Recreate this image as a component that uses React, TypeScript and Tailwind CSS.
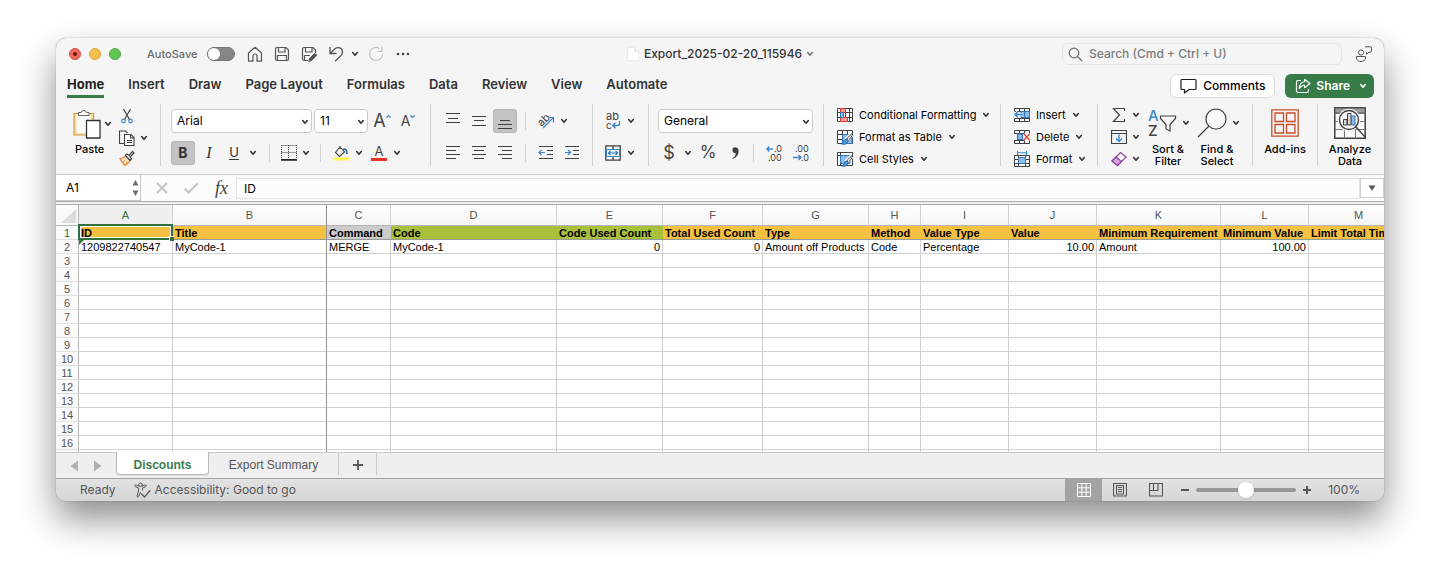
import { useState } from 'react';
import type { ReactNode } from 'react';

type Cell = { text: string; align?: 'right' };

const columns = [
  { letter: 'A', width: 'w-[94px]', title: 'ID', fill: 'bg-[#f4c142]' },
  { letter: 'B', width: 'w-[154px]', title: 'Title', fill: 'bg-[#f4c142]' },
  { letter: 'C', width: 'w-[64px]', title: 'Command', fill: 'bg-[#cccccc]' },
  { letter: 'D', width: 'w-[166px]', title: 'Code', fill: 'bg-[#a9c03a]' },
  { letter: 'E', width: 'w-[106px]', title: 'Code Used Count', fill: 'bg-[#a9c03a]' },
  { letter: 'F', width: 'w-[100px]', title: 'Total Used Count', fill: 'bg-[#f4c142]' },
  { letter: 'G', width: 'w-[106px]', title: 'Type', fill: 'bg-[#f4c142]' },
  { letter: 'H', width: 'w-[52px]', title: 'Method', fill: 'bg-[#f4c142]' },
  { letter: 'I', width: 'w-[88px]', title: 'Value Type', fill: 'bg-[#f4c142]' },
  { letter: 'J', width: 'w-[88px]', title: 'Value', fill: 'bg-[#f4c142]' },
  { letter: 'K', width: 'w-[124px]', title: 'Minimum Requirement', fill: 'bg-[#f4c142]' },
  { letter: 'L', width: 'w-[88px]', title: 'Minimum Value', fill: 'bg-[#f4c142]' },
  { letter: 'M', width: 'w-[100px]', title: 'Limit Total Times', fill: 'bg-[#f4c142]' },
];

const record: Cell[] = [
  { text: '1209822740547' },
  { text: 'MyCode-1' },
  { text: 'MERGE' },
  { text: 'MyCode-1' },
  { text: '0', align: 'right' },
  { text: '0', align: 'right' },
  { text: 'Amount off Products' },
  { text: 'Code' },
  { text: 'Percentage' },
  { text: '10.00', align: 'right' },
  { text: 'Amount' },
  { text: '100.00', align: 'right' },
  { text: '' },
];

const emptyRows = Array.from({ length: 14 }, (_, i) => i + 3);

const ribbonTabs = ['Home', 'Insert', 'Draw', 'Page Layout', 'Formulas', 'Data', 'Review', 'View', 'Automate'];

// ---------- small building blocks ----------

function Icon({ w = 16, h = 16, children }: { w?: number; h?: number; children: ReactNode }) {
  return (
    <svg width={w} height={h} viewBox={`0 0 ${w} ${h}`} fill="none" stroke="#404040" strokeWidth="1" className="block shrink-0" aria-hidden="true">
      {children}
    </svg>
  );
}

function Chevron({ color = '#333333' }: { color?: string }) {
  return (
    <svg width="8" height="6" viewBox="0 0 8 6" fill="none" className="block shrink-0" aria-hidden="true">
      <path d="M1.700 1.500 4 4.200 6.300 1.500" stroke={color} strokeWidth="1.600" strokeLinecap="round" strokeLinejoin="round" />
    </svg>
  );
}

function Tool({ label, size = 'w-6', active = false, children }: { label: string; size?: string; active?: boolean; children: ReactNode }) {
  return (
    <button
      type="button"
      aria-label={label}
      className={`flex h-6 shrink-0 items-center justify-center rounded-sm ${size} ${active ? 'bg-[#c4c4c4] ring-1 ring-[#b4b4b4] ring-inset' : ''}`}
    >
      {children}
    </button>
  );
}

function More({ label, size = 'w-3' }: { label: string; size?: string }) {
  return (
    <Tool label={label} size={size}>
      <Chevron />
    </Tool>
  );
}

function Group({ width, last = false, children }: { width: string; last?: boolean; children: ReactNode }) {
  return (
    <div className={`h-[62px] shrink-0 border-[#d0d0d0] ${last ? '' : 'border-r'} ${width}`}>{children}</div>
  );
}

function Divider() {
  return <span className="mx-2 h-[18px] w-px shrink-0 bg-[#d0d0d0]" />;
}

function Dropdown({ label, value, width }: { label: string; value: string; width: string }) {
  return (
    <div className={`relative shrink-0 ${width}`}>
      <select
        aria-label={label}
        defaultValue={value}
        className="block h-6 w-full appearance-none rounded-sm border border-[#cbcbcb] bg-white pl-[5px] text-xs text-black"
      >
        <option>{value}</option>
      </select>
      <span className="pointer-events-none absolute top-[10px] right-[3px]">
        <Chevron />
      </span>
    </div>
  );
}

function MenuItem({ label, icon }: { label: string; icon: ReactNode }) {
  return (
    <button type="button" className="flex h-[22px] items-center gap-[6px] text-[11px] whitespace-nowrap text-black">
      {icon}
      <span>{label}</span>
      <Chevron />
    </button>
  );
}

function Lines({ rows }: { rows: [number, number, number][] }) {
  return (
    <Icon>
      {rows.map(([y, x1, x2]) => (
        <path key={y} d={`M${x1} ${y + 0.5}H${x2}`} strokeWidth="1.2" />
      ))}
    </Icon>
  );
}

function BrushOverlay() {
  return (
    <>
      <path d="M15.500 4.500 9 11" stroke="#f5f5f5" strokeWidth="4.500" />
      <path d="M15.800 4.200c-2 1-5 4.200-6 5.800l1.500 1.300c1.800-1.500 4-4.500 4.500-7.100Z" fill="#ffffff" stroke="#404040" />
      <path d="M9.300 10.300c-2 0-2.300 1.800-2.800 3.200-.4.900-1.200 1.300-1.800 1.400 2.600 1.100 6 .2 6-3.200Z" fill="#5b9bd5" stroke="#2467a5" strokeWidth=".9" />
    </>
  );
}

// ---------- window header ----------

function TitleBar() {
  const [autoSave, setAutoSave] = useState(false);

  return (
    <header className="flex h-8 items-center">
      <div className="flex flex-1 items-center">
        <div className="flex gap-2 pl-[13px]">
          <button type="button" aria-label="Close" className="flex size-3 items-center justify-center rounded-full border border-[#d5524a] bg-[#ed6a5e]">
            <span className="size-1 rounded-full bg-[#7a0f0b]" />
          </button>
          <button type="button" aria-label="Minimize" className="size-3 rounded-full border border-[#dba23c] bg-[#f5bf4f]" />
          <button type="button" aria-label="Zoom window" className="size-3 rounded-full border border-[#4fad3f] bg-[#61c554]" />
        </div>
        <label className="ml-[26px] flex items-center gap-[10px] text-[11px] font-medium text-[#6b6b6b]">
          AutoSave
          <input type="checkbox" role="switch" checked={autoSave} onChange={(e) => setAutoSave(e.target.checked)} className="peer sr-only" />
          <span className="flex h-[14px] w-7 rounded-full border border-[#777777] bg-[#858585] peer-checked:justify-end">
            <span className="size-3 rounded-full bg-white shadow" />
          </span>
        </label>
        <div className="ml-[6px] flex items-center">
          <Tool label="Home screen" size="w-[27px]">
            <Icon>
              <path d="M1.500 7 8 1.300 14.500 7v8.200H10V10a2 2 0 0 0-4 0v5.200H1.500Z" stroke="#555555" strokeLinejoin="round" strokeWidth="1.200" />
            </Icon>
          </Tool>
          <Tool label="Save" size="w-[27px]">
            <Icon>
              <path d="M1.500 3A1.500 1.500 0 0 1 3 1.500h9L14.500 4v9a1.500 1.500 0 0 1-1.500 1.500H3A1.500 1.500 0 0 1 1.500 13ZM4.500 1.500V6h6.500V1.500M3.500 14.500v-5h9v5" stroke="#555555" strokeWidth="1.200" />
            </Icon>
          </Tool>
          <Tool label="Save as" size="w-[27px]">
            <Icon>
              <path d="M7 14.500H3A1.500 1.500 0 0 1 1.500 13V3A1.500 1.500 0 0 1 3 1.500h9L14.500 4v3M4.500 1.500V6h6.500V1.500M3.500 14.500v-5H9" stroke="#555555" strokeWidth="1.200" />
              <path d="M13.800 7.300 15.800 9.300 10.600 14.500 7.800 15.300 8.500 12.500Z" fill="#555555" stroke="#555555" />
            </Icon>
          </Tool>
          <Tool label="Undo" size="w-[27px]">
            <Icon>
              <path d="M2 1v6.500h6.500M2.200 7.200 7 2.800C10 .2 14.500 2 14.500 6c0 1.600-.7 2.700-1.700 3.700L7 15.300" stroke="#555555" strokeWidth="1.300" />
            </Icon>
          </Tool>
          <More label="Undo history" size="w-[11px]" />
          <span className="w-1" />
          <Tool label="Repeat">
            <Icon>
              <path d="M14.500 8A6.500 6.500 0 1 1 11.500 2.500M13.900 1v4.500H9.500" stroke="#c2c2c2" strokeWidth="1.200" />
            </Icon>
          </Tool>
          <span className="w-[3px]" />
          <Tool label="More commands">
            <Icon>
              <g fill="#404040" stroke="none">
                <circle cx="3" cy="8" r="1.300" />
                <circle cx="8" cy="8" r="1.300" />
                <circle cx="13" cy="8" r="1.300" />
              </g>
            </Icon>
          </Tool>
        </div>
      </div>

      <button type="button" className="flex items-center gap-1 text-xs font-medium text-[#333333]">
        <Icon w={14} h={16}>
          <path d="M1.500 1.500h7l4 4v9h-11Z" fill="#ffffff" stroke="#ebebeb" />
          <path d="M8.500 1.500v4h4" fill="#f0f0f0" stroke="#e8e8e8" />
        </Icon>
        <span>Export_2025-02-20_115946</span>
        <Chevron color="#777777" />
      </button>

      <div className="flex flex-1 items-center justify-end">
        <label className="flex h-[22px] w-[280px] items-center gap-[6px] rounded-md border border-[#e4e4e4] pl-[5px]">
          <Icon w={15} h={15}>
            <circle cx="6" cy="6" r="4.800" stroke="#6b6b6b" strokeWidth="1.200" />
            <path d="m9.500 9.500 4.500 4.500" stroke="#6b6b6b" strokeWidth="1.300" />
          </Icon>
          <input
            type="search"
            aria-label="Search"
            placeholder="Search (Cmd + Ctrl + U)"
            className="min-w-0 flex-1 bg-transparent text-xs font-medium outline-none placeholder:text-[#7c7c7c]"
          />
        </label>
        <button type="button" aria-label="Presence" className="mr-3 ml-[13px]">
          <Icon w={17}>
            <g stroke="#555555">
              <circle cx="6" cy="6.500" r="2.600" />
              <path d="M1.500 10.500h9v1.500c0 2-2 3.500-4.500 3.500S1.500 14 1.500 12Z" strokeLinejoin="round" />
              <path d="M10 .8h5.500a1 1 0 0 1 1 1v3.400a1 1 0 0 1-1 1H14l-2.500 2v-2" strokeLinejoin="round" />
            </g>
          </Icon>
        </button>
      </div>
    </header>
  );
}

function RibbonTabs() {
  return (
    <div className="flex h-[34px] items-start justify-between pr-[10px] pl-[11px]">
      <nav className="flex gap-6 pt-1 text-[13px] leading-[21px] font-semibold text-[#333333]">
        {ribbonTabs.map((tab) => (
          <a key={tab} href="#" className={tab === 'Home' ? 'border-b-3 border-[#377b48] font-bold text-[#222222]' : 'border-b-3 border-transparent'}>
            {tab}
          </a>
        ))}
      </nav>
      <div className="flex gap-[10px] pt-1">
        <button type="button" className="flex h-6 items-center gap-[6px] rounded-md border border-[#dcdcdc] bg-white px-[9px] text-xs font-medium text-black">
          <Icon w={17}>
            <path d="M2 1.500h13a1 1 0 0 1 1 1v8a1 1 0 0 1-1 1H9L4.500 15v-3.500H2a1 1 0 0 1-1-1v-8a1 1 0 0 1 1-1Z" stroke="#1c1c1c" strokeWidth="1.200" strokeLinejoin="round" />
          </Icon>
          Comments
        </button>
        <button type="button" className="flex h-6 items-center rounded-md bg-[#377c48] pr-[7px] pl-[10px] text-xs font-semibold text-white">
          <Icon>
            <path d="M6 2.500H3A1.500 1.500 0 0 0 1.500 4v9A1.500 1.500 0 0 0 3 14.500h9a1.500 1.500 0 0 0 1.500-1.500v-2" stroke="#ffffff" strokeWidth="1.200" />
            <path d="M9.500 1.300 15 5.500 9.500 9.700V7.200C7 7.200 5.500 8.300 4.300 10.500 4.500 6.500 6.500 4 9.500 3.700Z" stroke="#ffffff" strokeWidth="1.100" strokeLinejoin="round" />
          </Icon>
          <span className="mr-[9px] ml-[5px]">Share</span>
          <Chevron color="#ffffff" />
        </button>
      </div>
    </div>
  );
}

// ---------- ribbon ----------

function ClipboardGroup() {
  return (
    <Group width="w-[105px]">
      <div className="flex pl-4">
        <div>
          <div className="flex items-center gap-[3px] pt-1">
            <Icon w={29} h={31}>
              <path d="M2 5.500h19.500V27H2Z" fill="#f9dfa2" stroke="#dc9448" strokeWidth="1.200" />
              <path d="M4.500 7.500h14.500V25H4.500Z" fill="#fbfbfb" stroke="none" />
              <path d="M6.500 7.500v-3h2.700a2.600 2.600 0 0 1 5.100 0H17v3Z" fill="#ffffff" stroke="#666666" />
              <path d="M14.500 12.500H28V30H14.500Z" fill="#ffffff" stroke="#333333" strokeWidth="1.300" />
            </Icon>
            <More label="Paste options" size="w-2" />
          </div>
          <button type="button" className="ml-[3px] block pt-1 text-[11px] leading-[13px] font-medium text-black">Paste</button>
        </div>
        <div className="ml-[5px] flex flex-col">
          <Tool label="Cut" size="w-5">
            <Icon>
              <path d="M4.500 1 10.500 11.500M11.500 1 5.500 11.500" strokeWidth="1.200" />
              <circle cx="4.500" cy="13" r="1.800" stroke="#3a86c8" strokeWidth="1.200" />
              <circle cx="11.500" cy="13" r="1.800" stroke="#3a86c8" strokeWidth="1.200" />
            </Icon>
          </Tool>
          <div className="-mt-0.5 flex">
            <Tool label="Copy" size="w-5">
              <Icon>
                <path d="M5.500 13.500h-5V1h6l2 2" strokeWidth="1.200" />
                <path d="M5.500 4.500h6.500l3 3v8h-9.500ZM11.500 4.500V8H15M8 10.500h5M8 12.500h5" fill="#ffffff" strokeWidth="1.100" />
              </Icon>
            </Tool>
            <More label="Copy options" size="w-[14px]" />
          </div>
          <div className="-mt-1">
            <Tool label="Format painter" size="w-5">
              <Icon>
                <path d="M1 8.500c2 0 4-1 6-2.500l4.500 4.500C10 12.500 8 14.500 6 15.500 4 13.500 2 11.500 1 8.500Z" fill="#fbe4c4" stroke="#e08a3c" strokeWidth="1.200" />
                <path d="M4 12 6.500 10M6.500 14 9 11.500" stroke="#e08a3c" />
                <path d="M6.500 5.500 8 4l2 1.500 3.500-4 1.500 1.500-4 4 1.500 1.500-1.500 2Z" fill="#ffffff" strokeWidth="1.200" />
              </Icon>
            </Tool>
          </div>
        </div>
      </div>
    </Group>
  );
}

function FontGroup() {
  return (
    <Group width="w-[270px]">
      <div className="flex items-center gap-[2px] pt-[5px] pl-[10px]">
        <Dropdown label="Font" value="Arial" width="w-[141px]" />
        <Dropdown label="Font size" value="11" width="w-[54px]" />
        <Tool label="Increase font size">
          <span className="text-lg leading-6 text-[#444444]">A</span>
          <Icon w={5} h={14}>
            <path d="M.5 3.500 2.500 1.500 4.500 3.500" stroke="#3a86c8" strokeWidth="1.200" />
          </Icon>
        </Tool>
        <Tool label="Decrease font size">
          <span className="text-sm leading-6 text-[#444444]">A</span>
          <Icon w={5} h={14}>
            <path d="M.5 1.500 2.500 3.500 4.500 1.500" stroke="#3a86c8" strokeWidth="1.200" />
          </Icon>
        </Tool>
      </div>
      <div className="flex items-center pt-2 pl-[10px]">
        <Tool label="Bold" active>
          <span className="text-sm font-bold text-[#333333]">B</span>
        </Tool>
        <Tool label="Italic" size="w-7">
          <span className="font-['Liberation_Serif',serif] text-base text-[#333333] italic">I</span>
        </Tool>
        <Tool label="Underline" size="w-[22px]">
          <span className="text-[13px] text-[#333333] underline underline-offset-2">U</span>
        </Tool>
        <More label="Underline options" size="w-4" />
        <Divider />
        <Tool label="Borders" size="w-[22px]">
          <Icon>
            <path d="M.5.500h15M.5 7.500h15M.5 0v14M7.500 0v14M15.500 0v14" strokeDasharray="1 1" />
            <path d="M0 14.800h16" strokeWidth="1.800" stroke="#222222" />
          </Icon>
        </Tool>
        <More label="Border options" />
        <Divider />
        <Tool label="Fill color">
          <Icon>
            <path d="m7 2 4.500 5-5 4.500L2.500 7.500ZM7 4V1" stroke="#404040" strokeWidth="1.100" />
            <path d="M10 4.500c2.500-1 4 .5 3.800 4.500" stroke="#2f6fb5" strokeWidth="1.800" />
            <path d="M0 12.500h16v3H0Z" fill="#fdfb54" stroke="none" />
          </Icon>
        </Tool>
        <More label="Fill color options" />
        <span className="w-0.5" />
        <Tool label="Font color">
          <span className="flex flex-col items-center">
            <span className="text-[13px] leading-[13px] text-[#444444]">A</span>
            <span className="h-[3px] w-4 bg-[#e93323]" />
          </span>
        </Tool>
        <More label="Font color options" />
      </div>
    </Group>
  );
}

function AlignmentGroup() {
  return (
    <Group width="w-[162px]">
      <div className="flex items-center gap-0.5 pt-[5px] pl-[10px]">
        <Tool label="Top align"><Lines rows={[[0, 1, 15], [5, 3, 13], [9, 1, 15]]} /></Tool>
        <Tool label="Middle align"><Lines rows={[[3, 1, 15], [7, 3, 13], [12, 1, 15]]} /></Tool>
        <Tool label="Bottom align" active><Lines rows={[[7, 3, 13], [11, 1, 15], [15, 1, 15]]} /></Tool>
        <span className="mx-[6px] h-[18px] w-px bg-[#d0d0d0]" />
        <Tool label="Orientation">
          <svg width="18" height="18" viewBox="0 0 18 18" fill="none" className="block overflow-visible" aria-hidden="true">
            <text x="0" y="12" transform="rotate(-45 6 8)" fontSize="11" fill="#404040">ab</text>
            <path d="m6 16 10-10M11.500 5.500H16.500V10.500" stroke="#3a86c8" strokeWidth="1.200" />
          </svg>
        </Tool>
        <More label="Orientation options" size="w-2" />
      </div>
      <div className="flex items-center gap-0.5 pt-2 pl-[10px]">
        <Tool label="Align left"><Lines rows={[[1, 1, 15], [5, 1, 11], [9, 1, 15], [13, 1, 11]]} /></Tool>
        <Tool label="Center"><Lines rows={[[1, 1, 15], [5, 3, 13], [9, 1, 15], [13, 3, 13]]} /></Tool>
        <Tool label="Align right"><Lines rows={[[1, 1, 15], [5, 5, 15], [9, 1, 15], [13, 5, 15]]} /></Tool>
        <span className="mx-[6px] h-[18px] w-px bg-[#d0d0d0]" />
        <Tool label="Decrease indent">
          <Icon>
            <path d="M1 1.500h14M9 5.500h6M9 9.500h6M1 13.500h14" strokeWidth="1.200" />
            <path d="M7 7.500H1.500M3.500 5 1 7.500 3.500 10" stroke="#3a86c8" strokeWidth="1.200" />
          </Icon>
        </Tool>
        <Tool label="Increase indent">
          <Icon>
            <path d="M1 1.500h14M9 5.500h6M9 9.500h6M1 13.500h14" strokeWidth="1.200" />
            <path d="M1 7.500h5.500M4 5l2.500 2.500L4 10" stroke="#3a86c8" strokeWidth="1.200" />
          </Icon>
        </Tool>
      </div>
    </Group>
  );
}

function WrapGroup() {
  return (
    <Group width="w-[56px]">
      <div className="flex items-center pt-[5px] pl-2">
        <Tool label="Wrap text">
          <svg width="16" height="18" viewBox="0 0 16 18" fill="none" className="block overflow-visible" aria-hidden="true">
            <text x="1" y="8" fontSize="11" fill="#404040">ab</text>
            <text x="1" y="17" fontSize="10" fill="#404040">c</text>
            <path d="M14.500 9v2.500a2 2 0 0 1-2 2H8M10.500 10.800 7.800 13.500l2.700 2.700" stroke="#3a86c8" strokeWidth="1.300" />
          </svg>
        </Tool>
        <More label="Wrap text options" />
      </div>
      <div className="flex items-center pt-2 pl-2">
        <Tool label="Merge and center">
          <Icon>
            <path d="M.8.800h14.400v14.400H.8ZM8 1v3M8 12v3" strokeWidth="1.300" />
            <path d="M1.500 4.500h13v7h-13Z" fill="#e6f1fa" stroke="#3a86c8" />
            <path d="M3.500 8h9M5.500 6l-2 2 2 2M10.500 6l2 2-2 2" stroke="#2f7cc0" strokeWidth="1.200" />
          </Icon>
        </Tool>
        <More label="Merge options" />
      </div>
    </Group>
  );
}

function NumberGroup() {
  return (
    <Group width="w-[175px]">
      <div className="pt-[5px] pl-[9px]">
        <Dropdown label="Number format" value="General" width="w-[155px]" />
      </div>
      <div className="flex items-center pt-2 pl-2">
        <Tool label="Currency"><span className="text-lg text-[#444444]">$</span></Tool>
        <More label="Currency options" size="w-[14px]" />
        <Tool label="Percent style" size="w-[26px]"><span className="text-[17px] text-[#444444]">%</span></Tool>
        <Tool label="Comma style" size="w-7">
          <Icon w={10} h={14}>
            <path d="M5 1.200a3 3 0 1 0 .8 6C5.800 9.500 4.500 11 2.300 12.200l.4.800C6.300 11.600 8.600 9 8.600 5.200 8.600 2.700 7.200 1.200 5 1.200Z" fill="#404040" stroke="none" />
          </Icon>
        </Tool>
        <span className="mr-2 ml-1 h-[18px] w-px bg-[#d0d0d0]" />
        <Tool label="Increase decimal">
          <svg width="18" height="18" viewBox="0 0 18 18" fill="none" className="block overflow-visible" aria-hidden="true">
            <text x="9" y="8" fontSize="9" fill="#404040">.0</text>
            <text x="3" y="17" fontSize="9" fill="#404040">.00</text>
            <path d="M8 5H2M4.300 2.500 1.800 5 4.300 7.500" stroke="#3a86c8" strokeWidth="1.300" />
          </svg>
        </Tool>
        <span className="w-[3px]" />
        <Tool label="Decrease decimal">
          <svg width="18" height="18" viewBox="0 0 18 18" fill="none" className="block overflow-visible" aria-hidden="true">
            <text x="3" y="8" fontSize="9" fill="#404040">.00</text>
            <text x="9" y="17" fontSize="9" fill="#404040">.0</text>
            <path d="M1 13.500h8M6.500 11 9 13.500 6.500 16" stroke="#3a86c8" strokeWidth="1.300" />
          </svg>
        </Tool>
      </div>
    </Group>
  );
}

function StylesGroup() {
  return (
    <Group width="w-[177px]">
      <div className="pl-[13px]">
        <MenuItem
          label="Conditional Formatting"
          icon={
            <Icon>
              <path d="M.5 1.500h15v13H.5ZM.5 5.500h15M.5 10.500h15M3.500 1.500v13M8.500 1.500v13M12.500 1.500v13" fill="#ffffff" />
              <path d="M3.500 1.500h5v4h-5ZM3.500 10.500h7v4h-7Z" fill="#f29a94" stroke="#d93a30" />
              <path d="M3.500 5.500h3v5h-3Z" fill="#8dbce8" stroke="#2f76bd" />
            </Icon>
          }
        />
        <MenuItem
          label="Format as Table"
          icon={
            <Icon>
              <path d="M.5 1.500h15v13H.5ZM.5 5.500h15M.5 10.500h15M5.500 1.500v13M10.500 1.500v13" fill="#ffffff" />
              <path d="M5.500 5.500h9.500v9H5.500Z" fill="#8dbce8" stroke="#2f76bd" />
              <BrushOverlay />
            </Icon>
          }
        />
        <MenuItem
          label="Cell Styles"
          icon={
            <Icon>
              <path d="M.5 1.500h15v13H.5ZM.5 4.500h15M3.500 1.500v13" fill="#ffffff" />
              <path d="M3.500 4.500h9.500v8H3.500Z" fill="#8dbce8" stroke="#2f76bd" />
              <BrushOverlay />
            </Icon>
          }
        />
      </div>
    </Group>
  );
}

function CellsGroup() {
  return (
    <Group width="w-[97px]">
      <div className="pl-[13px]">
        <MenuItem
          label="Insert"
          icon={
            <Icon>
              <path d="M.5 4V1.500h15v13H.5V12M5.500 1.500v3M10.500 1.500v13M5.500 11v3.500M.5 4.500h15M.5 11.500h15" />
              <path d="M7 4.500h8.500v6H7Z" fill="#8dbce8" stroke="#2f76bd" />
              <path d="M10.500 4.500v6" stroke="#2f76bd" />
              <path d="M9 7.500H1.200M4 4.500 1 7.500l3 3" stroke="#f5f5f5" strokeWidth="3" />
              <path d="M9 7.500H1.200M4 4.500 1 7.500l3 3" stroke="#2f86d0" strokeWidth="1.300" />
            </Icon>
          }
        />
        <MenuItem
          label="Delete"
          icon={
            <Icon>
              <path d="M.5 4.500v-3h15v3M.5 11.500v3h15v-3M.5 4.500H4M.5 11.500H4M5.500 1.500v3M10.500 1.500v3M5.500 11.500v3M10.500 11.500v3M0 4.500h10M0 11.500h10" />
              <path d="M3.500 5h5v5.500h-5Z" fill="#8dbce8" stroke="#2f76bd" strokeWidth="1.200" />
              <path d="m10 5 5.500 6M15.500 5 10 11" stroke="#e0453a" strokeWidth="1.300" />
            </Icon>
          }
        />
        <MenuItem
          label="Format"
          icon={
            <Icon>
              <path d="M.5 4.500h15v11H.5ZM.5 8.500h15M.5 12.500h15M4.500 4.500v11M11.500 4.500v11" fill="#ffffff" />
              <path d="M4.500 6.500h7v6h-7Z" fill="#8dbce8" stroke="#2f76bd" />
              <path d="M3.500 0v4M12.500 0v4M3.500 1.800h9" stroke="#2f86d0" />
            </Icon>
          }
        />
      </div>
    </Group>
  );
}

function EditingGroup() {
  return (
    <Group width="w-[155px]">
      <div className="flex pl-3">
        <div className="flex flex-col">
          <div className="flex h-[22px] items-center gap-1">
            <Tool label="AutoSum" size="w-[18px]">
              <Icon>
                <path d="M13.500 4V1.500h-11L8.500 8l-6 6.500h11V12" strokeWidth="1.200" />
              </Icon>
            </Tool>
            <More label="AutoSum options" size="w-2" />
          </div>
          <div className="flex h-[22px] items-center gap-1">
            <Tool label="Fill" size="w-[18px]">
              <Icon>
                <path d="M.5 1.500h15v13H.5ZM.5 4.500h15" strokeWidth="1.200" />
                <path d="M8 5.500v7M5 9.500l3 3 3-3" stroke="#2f86d0" strokeWidth="1.300" />
              </Icon>
            </Tool>
            <More label="Fill options" size="w-2" />
          </div>
          <div className="flex h-[22px] items-center gap-1">
            <Tool label="Clear" size="w-[18px]">
              <Icon>
                <path d="M9.500 1.500 15 6 6.500 14.500 1 10Z" fill="#ffffff" stroke="#8d3fa0" strokeWidth="1.200" />
                <path d="M5 6 10.500 10.500 6.500 14.500 1 10Z" fill="#d9a3e3" stroke="#8d3fa0" strokeWidth="1.200" />
              </Icon>
            </Tool>
            <More label="Clear options" size="w-2" />
          </div>
        </div>
        <button type="button" className="ml-2 flex flex-col pt-1 text-[11px] leading-3 font-medium text-black">
          <span className="flex items-center gap-1">
            <svg width="30" height="30" viewBox="0 0 30 30" fill="none" className="block overflow-visible" aria-hidden="true">
              <text x="0" y="13" fontSize="15" fill="#3a86c8">A</text>
              <text x="0" y="28" fontSize="15" fill="#404040">Z</text>
              <path d="M12.500 8h15v2.500l-5.500 6v6.500l-4-2v-4.500l-5.500-6Z" stroke="#404040" strokeWidth="1.200" />
            </svg>
            <Chevron />
          </span>
          <span className="mt-[5px] w-10">Sort &amp; Filter</span>
        </button>
        <button type="button" className="ml-[7px] flex flex-col pt-1 text-[11px] leading-3 font-medium text-black">
          <span className="flex items-center gap-[5px]">
            <Icon w={30} h={30}>
              <circle cx="19" cy="11" r="10" strokeWidth="1.200" fill="#fafafa" />
              <path d="M12 18 1 29" strokeWidth="1.300" />
            </Icon>
            <Chevron />
          </span>
          <span className="mt-[5px] w-10">Find &amp; Select</span>
        </button>
      </div>
    </Group>
  );
}

function AddInsGroup() {
  return (
    <Group width="w-[65px]">
      <button type="button" className="flex w-full flex-col items-center pt-[5px] text-[11px] leading-3 font-medium text-black">
        <Icon w={28} h={28}>
          <path d="M.8.800h26.400v26.400H.8Z" stroke="#c84c26" strokeWidth="1.300" />
          <path d="M4 4h8.500v8.500H4ZM15.500 4H24v8.500h-8.500ZM4 15.500h8.500V24H4ZM15.500 15.500H24V24h-8.500Z" stroke="#c84c26" strokeWidth="1.300" />
        </Icon>
        <span className="mt-[6px]">Add-ins</span>
      </button>
    </Group>
  );
}

function AnalyzeGroup() {
  return (
    <Group width="w-[66px]" last>
      <button type="button" className="flex w-[64px] flex-col items-center pt-[3px] text-[11px] leading-3 font-medium text-black">
        <Icon w={32} h={32}>
          <path d="M.8.800h30.400v30.400H.8Z" fill="#fafafa" strokeWidth="1.500" />
          <path d="M1 1h30v5H1Z" fill="#9b9b9b" stroke="#555555" />
          <path d="M1 14.500h30M1 22.500h30M10.500 22.500V31M21.500 22.500V31M1 6.500h30" stroke="#777777" />
          <circle cx="15" cy="13" r="10.500" fill="#fafafa" stroke="#f5f5f5" strokeWidth="1.500" />
          <circle cx="15" cy="13" r="9.500" fill="#fafafa" strokeWidth="1.400" />
          <path d="M9.500 12.500h3.500v5.500H9.500Z" fill="#d5d5d5" />
          <path d="M13.500 6.500H17V18h-3.500Z" fill="#d5d5d5" />
          <path d="M17.500 9H21v9h-3.500Z" fill="#8dbce8" stroke="#2f76bd" />
          <path d="m22 20 10 11" strokeWidth="1.500" />
        </Icon>
        <span className="mt-1 w-11">Analyze Data</span>
      </button>
    </Group>
  );
}

function FormulaBar() {
  return (
    <div className="flex h-[27px] items-start border-t border-[#c8c8c8] bg-[#fcfcfc]">
      <div className="flex h-[26px] w-[85px] items-center justify-between border-r border-b border-[#c8c8c8] bg-white pr-px pl-[10px]">
        <input aria-label="Name box" defaultValue="A1" className="w-14 bg-transparent text-xs outline-none" />
        <Icon w={7} h={18}>
          <path d="M3.500 1 6.500 6.500h-6ZM3.500 17 .5 11.500h6Z" fill="#6b6b6b" stroke="none" />
        </Icon>
      </div>
      <div className="flex h-[26px] items-center pl-[14px]">
        <button type="button" aria-label="Cancel">
          <Icon w={14} h={14}>
            <path d="m2 2 10 10M12 2 2 12" stroke="#c6c6c6" strokeWidth="2" />
          </Icon>
        </button>
        <button type="button" aria-label="Enter" className="ml-[14px]">
          <Icon w={16} h={14}>
            <path d="m1.500 7.500 4 4 9-9" stroke="#c6c6c6" strokeWidth="2.200" />
          </Icon>
        </button>
        <button type="button" aria-label="Insert function" className="ml-4 font-['Liberation_Serif',serif] text-lg text-[#404040] italic">
          fx
        </button>
      </div>
      <input aria-label="Formula" defaultValue="ID" className="mt-[3px] ml-2 h-[21px] min-w-0 flex-1 border border-[#e2e2e2] bg-transparent pl-[7px] text-xs text-black outline-none" />
      <button type="button" aria-label="Expand formula bar" className="mt-[3px] flex h-5 w-6 items-center justify-center border border-[#d0d0d0] bg-white">
        <Icon w={8} h={6}>
          <path d="M.5.500h7L4 5.800Z" fill="#555555" stroke="none" />
        </Icon>
      </button>
    </div>
  );
}

// ---------- grid ----------

function columnEdge(index: number) {
  return index === 1 ? 'border-r-[#8f8f8f]' : 'border-r-[#d0d0d0]';
}

function Grid() {
  const rowHead = 'border-r border-b border-r-[#b5b5b5] border-b-[#e0e0e0] bg-[#fafafa] px-0 pt-0.5 pb-0 text-center font-normal';

  return (
    <div className="h-[248px] overflow-hidden border-t border-[#a9a9a9] bg-white">
      <table className="w-[1353px] table-fixed border-separate border-spacing-0 font-['Liberation_Sans',sans-serif] text-[11px] leading-[11px] whitespace-nowrap text-black">
        <colgroup>
          <col className="w-[23px]" />
          {columns.map((col) => (
            <col key={col.letter} className={col.width} />
          ))}
        </colgroup>
        <thead>
          <tr className="h-[21px]">
            <th className="border-r border-b border-[#b5b5b5] bg-[#fafafa] p-0" aria-label="Select all">
              <svg width="22" height="20" viewBox="0 0 22 20" className="block" aria-hidden="true">
                <path d="M20 4v14H5Z" fill="#dcdcdc" />
              </svg>
            </th>
            {columns.map((col, i) => (
              <th
                key={col.letter}
                scope="col"
                className={`border-r border-b border-b-[#b5b5b5] p-0 font-normal ${columnEdge(i)} ${i === 0 ? 'bg-[#f0f0f0] text-[#2f6f40]' : 'bg-linear-to-b from-white to-[#f5f5f5] text-[#555555]'}`}
              >
                {col.letter}
              </th>
            ))}
          </tr>
        </thead>
        <tbody>
          <tr className="h-[14px]">
            <th scope="row" className={`${rowHead} text-[#2f6f40]`}>1</th>
            {columns.map((col, i) => (
              <td
                key={col.letter}
                className={`relative border-b border-b-[#9a9a9a] px-0.5 pt-0.5 pb-0 font-bold ${col.fill} ${i === 0 ? 'z-10' : ''} ${i === 1 ? 'border-r border-r-[#8f8f8f]' : ''}`}
              >
                {col.title}
                {i === 0 && (
                  <span className="pointer-events-none absolute -top-0.5 right-0 -bottom-px -left-px border-2 border-[#2f6f40] inset-ring inset-ring-white">
                    <span className="absolute -right-[3px] -bottom-[3px] size-[5px] border-t border-l border-white bg-[#2f6f40]" />
                  </span>
                )}
              </td>
            ))}
          </tr>
          <tr className="h-[14px]">
            <th scope="row" className={`${rowHead} text-[#555555]`}>2</th>
            {record.map((cell, i) => (
              <td
                key={columns[i].letter}
                className={`relative border-r border-b border-b-[#d0d0d0] px-0.5 pt-0.5 pb-0 ${columnEdge(i)} ${cell.align === 'right' ? 'text-right' : ''}`}
              >
                {i === 0 && (
                  <svg width="5" height="5" viewBox="0 0 5 5" className="absolute top-0 left-0" aria-hidden="true">
                    <path d="M0 0h5L0 5Z" fill="#2f8040" />
                  </svg>
                )}
                {cell.text}
              </td>
            ))}
          </tr>
          {emptyRows.map((row) => (
            <tr key={row} className="h-[14px]">
              <th scope="row" className={`${rowHead} text-[#555555]`}>{row}</th>
              {columns.map((col, i) => (
                <td key={col.letter} className={`border-r border-b border-b-[#d0d0d0] p-0 ${columnEdge(i)}`} />
              ))}
            </tr>
          ))}
          <tr className="h-[14px]">
            <td className="border-r border-r-[#b5b5b5] bg-[#fafafa] p-0" />
            {columns.map((col, i) => (
              <td key={col.letter} className={`border-r p-0 ${columnEdge(i)}`} />
            ))}
          </tr>
        </tbody>
      </table>
    </div>
  );
}

// ---------- footer ----------

function SheetTabs() {
  return (
    <div className="flex h-[26px] items-start border-t border-[#cbcbcb] bg-[#efefef] font-['Liberation_Sans',sans-serif] text-xs text-[#555555]">
      <div className="flex h-[25px] w-[60px] items-center gap-4 pl-[14px]">
        <button type="button" aria-label="Previous sheet">
          <Icon w={8} h={12}><path d="M8 .500v11L.5 6Z" fill="#b0b0b0" stroke="none" /></Icon>
        </button>
        <button type="button" aria-label="Next sheet">
          <Icon w={8} h={12}><path d="M0 .500v11L7.500 6Z" fill="#b0b0b0" stroke="none" /></Icon>
        </button>
      </div>
      <button type="button" className="-mt-px h-[23px] w-[93px] rounded-b-sm border border-t-0 border-[#b9b9b9] bg-white pt-[3px] font-bold text-[#3a7d4c] shadow-xs">Discounts</button>
      <button type="button" className="h-[22px] w-[130px] border-r border-[#cbcbcb] pt-0.5">Export Summary</button>
      <button type="button" aria-label="Add sheet" className="flex h-[22px] w-[38px] items-center justify-center border-r border-[#cbcbcb] pt-0.5">
        <Icon w={12} h={12}><path d="M6 1v10M1 6h10" strokeWidth="1.800" stroke="#555555" /></Icon>
      </button>
    </div>
  );
}

function StatusBar() {
  const [zoom, setZoom] = useState(50);

  return (
    <footer className="flex h-[23px] items-center justify-between border-t border-[#a3a3a3] bg-linear-to-b from-[#e2e2e2] to-[#d6d6d6] text-xs text-[#555555]">
      <div className="flex items-center pl-6">
        <span>Ready</span>
        <button type="button" className="ml-[18px] flex items-center gap-1">
          <Icon w={17}>
            <g stroke="#555555" strokeLinecap="round" strokeLinejoin="round">
              <circle cx="6.500" cy="2.800" r="1.800" />
              <path d="M4.500 4 2 3c-1.200-.4-1.800 1.200-.6 1.700L4.500 6v3L3 14c-.2 1 1.200 1.500 1.600.5L6.500 10.500M8.500 4 11 3c1.200-.4 1.800 1.200.6 1.700L8.500 6v2" />
              <path d="m7.500 12 3 3 5.500-6.500" strokeWidth="1.200" />
            </g>
          </Icon>
          Accessibility: Good to go
        </button>
      </div>
      <div className="flex items-center pr-6">
        <button type="button" aria-label="Normal view" className="flex h-[22px] w-[37px] items-center justify-center bg-[#a3a3a3]">
          <Icon w={14} h={14}>
            <path d="M.5.500h13v13H.5ZM.5 4.800h13M.5 9.200h13M4.800.500v13M9.200.500v13" stroke="#ffffff" />
          </Icon>
        </button>
        <button type="button" aria-label="Page layout view" className="flex w-9 items-center justify-center">
          <Icon w={14} h={14}>
            <path d="M.5.500h13v12.500H.5ZM3.500 2.500h7v8.500h-7ZM5 4.500h4M5 6.500h4M5 8.500h4" strokeWidth="1.100" stroke="#555555" />
          </Icon>
        </button>
        <button type="button" aria-label="Page break view" className="flex w-9 items-center justify-center">
          <Icon w={14} h={14}>
            <path d="M.5.500h13v12.500H.5ZM.5 7.500h8.500V.500M4.500.500v7" strokeWidth="1.100" stroke="#555555" />
          </Icon>
        </button>
        <button type="button" aria-label="Zoom out" className="ml-[6px]">
          <Icon w={10} h={10}><path d="M1 5h8" strokeWidth="2" stroke="#555555" /></Icon>
        </button>
        <input
          type="range"
          aria-label="Zoom"
          value={zoom}
          onChange={(e) => setZoom(Number(e.target.value))}
          className="mx-[6px] h-1 w-[100px] appearance-none rounded-full bg-[#979797] [&::-webkit-slider-thumb]:size-4 [&::-webkit-slider-thumb]:appearance-none [&::-webkit-slider-thumb]:rounded-full [&::-webkit-slider-thumb]:bg-white [&::-webkit-slider-thumb]:shadow-sm"
        />
        <button type="button" aria-label="Zoom in">
          <Icon w={10} h={10}><path d="M5 1v8M1 5h8" strokeWidth="2" stroke="#555555" /></Icon>
        </button>
        <span className="ml-4">100%</span>
      </div>
    </footer>
  );
}

export default function App() {
  return (
    <div className="min-h-screen bg-white px-14 pt-[38px] pb-[74px] font-[Inter,sans-serif]">
      <main className="overflow-hidden rounded-[10px] bg-[#f5f5f5] shadow-[0_0_1px_rgba(0,0,0,0.6),0_18px_36px_rgba(0,0,0,0.45)]">
        <TitleBar />
        <RibbonTabs />
        <div className="flex h-[70px] overflow-hidden">
          <ClipboardGroup />
          <FontGroup />
          <AlignmentGroup />
          <WrapGroup />
          <NumberGroup />
          <StylesGroup />
          <CellsGroup />
          <EditingGroup />
          <AddInsGroup />
          <AnalyzeGroup />
        </div>
        <FormulaBar />
        <div className="h-[3px] border-t border-[#a9a9a9] bg-[#f0f0f0]" />
        <Grid />
        <SheetTabs />
        <StatusBar />
      </main>
    </div>
  );
}
